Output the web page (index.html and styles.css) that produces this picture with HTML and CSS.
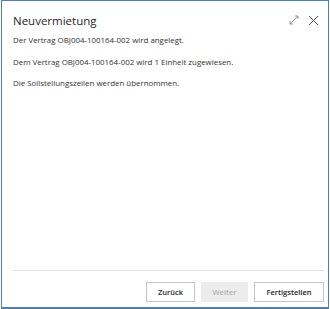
FILE: index.html
```html
<!DOCTYPE html>
<html lang="de">
  <head>
    <meta charset="UTF-8" />
    <meta name="viewport" content="width=device-width, initial-scale=1.0" />
    <title>Neuvermietung</title>
    <link rel="stylesheet" href="styles.css">
  </head>
  <body>
    <div class="dialog">
      <div class="dialog-header">
        <h1 class="title">Neuvermietung</h1>
        <div class="header-icons">
          <svg class="icon" width="10" height="10" viewBox="0 0 10 10">
            <path d="M1 9 L9 1 M6 1 H9 V4 M1 6 V9 H4" fill="none" stroke="#8a8a8a" stroke-width="0.9" />
          </svg>
          <svg class="icon" width="11" height="11" viewBox="0 0 11 11">
            <path d="M1 1 L10 10 M10 1 L1 10" fill="none" stroke="#555" stroke-width="1" />
          </svg>
        </div>
      </div>
      <div class="dialog-body">
        <p>Der Vertrag OBJ004-100164-002 wird angelegt.</p>
        <p>Dem Vertrag OBJ004-100164-002 wird 1 Einheit zugewiesen.</p>
        <p>Die Sollstellungszeilen werden übernommen.</p>
      </div>
      <div class="dialog-footer">
        <button class="btn btn-back">Zurück</button>
        <button class="btn btn-disabled" disabled>Weiter</button>
        <button class="btn btn-finish">Fertigstellen</button>
      </div>
    </div>
  </body>
</html>
```

FILE: styles.css
```css
body {
  margin: 0;
  font-family: "Open Sans", "Noto Sans", sans-serif;
  background-color: #fff;
}

.dialog {
  width: 326px;
  height: 306px;
  margin-left: 1px;
  border: 1px solid #4f7fba;
  border-bottom: 2px solid #4f7fba;
  box-shadow: 0 1px 0 #b9cfe8;
  display: flex;
  flex-direction: column;
  background-color: #fff;
}

.dialog-header {
  display: flex;
  align-items: center;
  justify-content: space-between;
  padding: 8px 9px 0 11px;
  height: 22px;
}

.title {
  margin: 0;
  font-size: 11.5px;
  font-weight: 400;
  color: #262626;
}

.header-icons {
  display: flex;
  align-items: center;
  gap: 9px;
}

.dialog-body {
  flex: 1;
  padding: 5px 11px 0;
}

.dialog-body p {
  margin: 0 0 12px;
  font-size: 7.9px;
  color: #333;
  line-height: 9.5px;
}

.dialog-footer {
  margin: 0 4px 0 11px;
  border-top: 1px solid #e3e3e3;
  padding: 11px 0 5px;
  display: flex;
  justify-content: flex-end;
  gap: 6px;
}

.btn {
  font-family: inherit;
  font-size: 7.5px;
  font-weight: 600;
  color: #262626;
  background-color: #fff;
  border: 1px solid #c6c6c6;
  height: 20px;
  padding: 0;
}

.btn-back {
  width: 49px;
}

.btn-disabled {
  width: 47px;
  background-color: #ececec;
  border-color: #ececec;
  color: #b3b3b3;
}

.btn-finish {
  width: 70px;
}
```
